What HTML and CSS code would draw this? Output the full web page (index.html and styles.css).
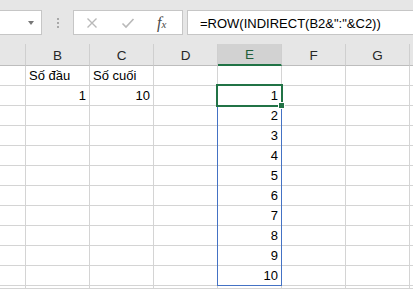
FILE: index.html
```html
<!DOCTYPE html>
<html lang="vi">
<head>
    <meta charset="UTF-8">
    <meta name="viewport" content="width=device-width, initial-scale=1.0">
    <title>ROW INDIRECT</title>
    <link rel="stylesheet" href="styles.css">
</head>
<body>
    <!-- Formula bar -->
    <div class="toolbar">
        <div class="name-box">
            <span class="drop-arrow"></span>
        </div>
        <div class="grip">
            <span></span><span></span><span></span>
        </div>
        <div class="fn-buttons">
            <svg class="icon icon-cancel" width="12" height="12" viewBox="0 0 12 12">
                <path d="M1.5 1.5 L10.5 10.5 M10.5 1.5 L1.5 10.5" stroke="#b9b9b9" stroke-width="1.4" fill="none"/>
            </svg>
            <svg class="icon icon-enter" width="14" height="12" viewBox="0 0 14 12">
                <path d="M1.5 6.5 L5 10 L12.5 2" stroke="#b9b9b9" stroke-width="1.6" fill="none"/>
            </svg>
            <span class="fx"><i>f</i><i class="fx-x">x</i></span>
        </div>
        <div class="formula">=ROW(INDIRECT(B2&amp;":"&amp;C2))</div>
    </div>

    <!-- Sheet -->
    <div class="sheet">
        <div class="row head">
            <div class="corner"></div>
            <div class="cell">B</div>
            <div class="cell">C</div>
            <div class="cell">D</div>
            <div class="cell active-col">E</div>
            <div class="cell">F</div>
            <div class="cell">G</div>
            <div class="cell edge"></div>
        </div>
        <div class="row">
            <div class="rh"></div>
            <div class="cell">Số đầu</div>
            <div class="cell">Số cuối</div>
            <div class="cell"></div><div class="cell"></div><div class="cell"></div><div class="cell"></div><div class="cell edge"></div>
        </div>
        <div class="row">
            <div class="rh"></div>
            <div class="cell num">1</div>
            <div class="cell num">10</div>
            <div class="cell"></div>
            <div class="cell num">1</div>
            <div class="cell"></div><div class="cell"></div><div class="cell edge"></div>
        </div>
        <div class="row"><div class="rh"></div><div class="cell"></div><div class="cell"></div><div class="cell"></div><div class="cell num">2</div><div class="cell"></div><div class="cell"></div><div class="cell edge"></div></div>
        <div class="row"><div class="rh"></div><div class="cell"></div><div class="cell"></div><div class="cell"></div><div class="cell num">3</div><div class="cell"></div><div class="cell"></div><div class="cell edge"></div></div>
        <div class="row"><div class="rh"></div><div class="cell"></div><div class="cell"></div><div class="cell"></div><div class="cell num">4</div><div class="cell"></div><div class="cell"></div><div class="cell edge"></div></div>
        <div class="row"><div class="rh"></div><div class="cell"></div><div class="cell"></div><div class="cell"></div><div class="cell num">5</div><div class="cell"></div><div class="cell"></div><div class="cell edge"></div></div>
        <div class="row"><div class="rh"></div><div class="cell"></div><div class="cell"></div><div class="cell"></div><div class="cell num">6</div><div class="cell"></div><div class="cell"></div><div class="cell edge"></div></div>
        <div class="row"><div class="rh"></div><div class="cell"></div><div class="cell"></div><div class="cell"></div><div class="cell num">7</div><div class="cell"></div><div class="cell"></div><div class="cell edge"></div></div>
        <div class="row"><div class="rh"></div><div class="cell"></div><div class="cell"></div><div class="cell"></div><div class="cell num">8</div><div class="cell"></div><div class="cell"></div><div class="cell edge"></div></div>
        <div class="row"><div class="rh"></div><div class="cell"></div><div class="cell"></div><div class="cell"></div><div class="cell num">9</div><div class="cell"></div><div class="cell"></div><div class="cell edge"></div></div>
        <div class="row"><div class="rh"></div><div class="cell"></div><div class="cell"></div><div class="cell"></div><div class="cell num">10</div><div class="cell"></div><div class="cell"></div><div class="cell edge"></div></div>
        <div class="row stub"><div class="rh"></div><div class="cell"></div><div class="cell"></div><div class="cell"></div><div class="cell"></div><div class="cell"></div><div class="cell"></div><div class="cell edge"></div></div>

        <!-- Selection overlays -->
        <div class="range-box"></div>
        <div class="active-cell"><span class="fill-handle"></span></div>
    </div>
</body>
</html>
```

FILE: styles.css
```css
/* General Styles */
body {
    margin: 0;
    padding: 0;
    width: 413px;
    height: 289px;
    overflow: hidden;
    background-color: #fff;
    font-family: 'Liberation Sans', Arial, sans-serif;
    font-size: 13px;
    color: #000;
}

/* Formula bar */
.toolbar {
    display: flex;
    align-items: flex-start;
    height: 44px;
    padding-top: 10px;
    box-sizing: border-box;
    background-color: #e6e6e6;
}

.name-box {
    width: 42px;
    height: 25px;
    box-sizing: border-box;
    background-color: #fff;
    border: 1px solid #c6c6c6;
    border-left: none;
    display: flex;
    align-items: center;
    justify-content: flex-end;
    padding-right: 7px;
    flex-shrink: 0;
}

.drop-arrow {
    width: 0;
    height: 0;
    border-left: 3.5px solid transparent;
    border-right: 3.5px solid transparent;
    border-top: 4px solid #777;
    margin-top: 1px;
}

.grip {
    width: 31px;
    height: 25px;
    display: flex;
    flex-direction: column;
    align-items: center;
    justify-content: center;
    gap: 2px;
    flex-shrink: 0;
}

.grip span {
    width: 2px;
    height: 2px;
    background-color: #a8a8a8;
}

.fn-buttons {
    width: 110px;
    height: 25px;
    box-sizing: border-box;
    background-color: #fff;
    border: 1px solid #c6c6c6;
    display: flex;
    align-items: center;
    padding-left: 12px;
    flex-shrink: 0;
}

.icon-cancel {
    margin-right: 23px;
}

.icon-enter {
    margin-right: 22px;
}

.fx {
    font-family: 'Liberation Serif', 'Times New Roman', serif;
    font-size: 16px;
    color: #4a4a4a;
}

.fx-x {
    font-size: 11px;
}

.formula {
    flex: 1;
    height: 25px;
    box-sizing: border-box;
    margin-left: 4px;
    background-color: #fff;
    border: 1px solid #c6c6c6;
    border-right: none;
    padding: 5px 0 0 12px;
    font-size: 13px;
    white-space: nowrap;
}

/* Sheet grid */
.sheet {
    position: relative;
}

.row {
    display: flex;
    height: 20px;
}

.row.stub {
    height: 3px;
}

.row .rh,
.row .corner {
    width: 26px;
    flex-shrink: 0;
    box-sizing: border-box;
    border-right: 1px solid #d4d4d4;
    border-bottom: 1px solid #d4d4d4;
}

.cell {
    width: 64px;
    flex-shrink: 0;
    box-sizing: border-box;
    border-right: 1px solid #d4d4d4;
    border-bottom: 1px solid #d4d4d4;
    padding: 0 3px 2px 3px;
    display: flex;
    align-items: flex-end;
    white-space: nowrap;
    line-height: 15px;
}

.cell.edge {
    width: 3px;
    padding: 0;
    border-right: none;
}

.cell.num {
    justify-content: flex-end;
}

.row.head {
    height: 22px;
    background-color: #e6e6e6;
}

.row.head .corner,
.row.head .cell {
    border-right-color: #cfcfcf;
    border-bottom-color: #bdbdbd;
}

.row.head .cell {
    justify-content: center;
    align-items: center;
    padding: 1px 0 0 0;
    color: #262626;
    font-size: 13.5px;
}

.row.head .active-col {
    background-color: #d2d2d2;
    color: #1e5e3a;
    border-bottom: 2px solid #217346;
}

.range-box {
    position: absolute;
    left: 217px;
    top: 41px;
    width: 65px;
    height: 201px;
    box-sizing: border-box;
    border: 1px solid #4472c4;
}

.active-cell {
    position: absolute;
    left: 216px;
    top: 40px;
    width: 67px;
    height: 23px;
    box-sizing: border-box;
    border: 2px solid #217346;
}

.fill-handle {
    position: absolute;
    right: -4px;
    bottom: -4px;
    width: 5px;
    height: 5px;
    background-color: #217346;
    border: 1px solid #fff;
}
```
